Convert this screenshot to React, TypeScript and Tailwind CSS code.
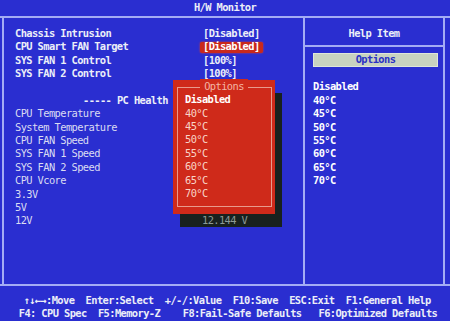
const MONO = "font-['DejaVu_Sans_Mono','Liberation_Mono',monospace]";

const settings = [
  { label: 'Chassis Intrusion', value: '[Disabled]' },
  { label: 'CPU Smart FAN Target', value: '[Disabled]', active: true },
  { label: 'SYS FAN 1 Control', value: '[100%]' },
  { label: 'SYS FAN 2 Control', value: '[100%]' },
];

const readings = [
  'CPU Temperature',
  'System Temperature',
  'CPU FAN Speed',
  'SYS FAN 1 Speed',
  'SYS FAN 2 Speed',
  'CPU Vcore',
  '3.3V',
  '5V',
  '12V',
];

const options = ['Disabled', '40°C', '45°C', '50°C', '55°C', '60°C', '65°C', '70°C'];

function Row({ children, className = '' }: { children?: React.ReactNode; className?: string }) {
  return <div className={`h-[13.4px] flex items-center whitespace-pre ${className}`}>{children}</div>;
}

function OptionsPopup() {
  return (
    <>
      {/* drop shadow, one cell right and one row down */}
      <div className="absolute left-[176px] top-[75.4px] w-[102px] h-[134px] bg-[#18211e] flex flex-col justify-end">
        <Row className="pl-[22px] font-normal text-[#8c9a96]">12.144 V</Row>
      </div>
      <div className="absolute left-[169px] top-[62px] w-[102px] h-[134px] bg-[#cf2a1a]">
        <div className="absolute left-[4px] right-[3px] top-[6.7px] bottom-[6.7px] border border-[#e89a8c]" />
        <div className="relative flex flex-col">
          <Row className="justify-center">
            <span className="bg-[#cf2a1a] px-[4px] font-normal text-[#f4b4a4]">Options</span>
          </Row>
          {options.map((o, i) => (
            <Row key={o} className={`pl-[12px] ${i === 0 ? 'text-white' : 'font-normal text-[#f8d4c8]'}`}>
              {o}
            </Row>
          ))}
        </div>
      </div>
    </>
  );
}

export default function App() {
  return (
    <div className={`w-[450px] h-[321px] bg-[#2a2ed0] text-[#eceef8] text-[10.4px] tracking-[-0.6px] font-bold ${MONO} flex flex-col overflow-hidden`}>
      <div className="h-[18px] border-b-2 border-[#a4acf4] flex items-center justify-center pb-[1px]">
        H/W Monitor
      </div>

      <div className="h-[268px] flex border-b-2 border-[#a4acf4]">
        <div className="ml-[2px] w-[303px] border-l-2 border-r-2 border-[#a4acf4] relative pt-[9px] pl-[11px]">
          {settings.map((s) => (
            <Row key={s.label}>
              <span className="w-[188px]">{s.label}</span>
              {s.active ? (
                <span className="-ml-[3px] px-[3px] h-[11px] flex items-center bg-[#c9291c] rounded-[2px] text-white shadow-[0_0_2px_#e04030]">
                  {s.value}
                </span>
              ) : (
                <span>{s.value}</span>
              )}
            </Row>
          ))}
          <Row />
          <Row className="pl-[68px]">----- PC Health</Row>
          {readings.map((r) => (
            <Row key={r} className="font-normal text-[#dadcf2]">
              {r}
            </Row>
          ))}
          <OptionsPopup />
        </div>

        <div className="w-[140px] mr-[3px] border-r-2 border-[#a4acf4] flex flex-col">
          <div className="h-[29px] border-b-2 border-[#a4acf4] pt-[9px]">
            <Row className="justify-center">Help Item</Row>
          </div>
          <div className="mt-[6px] ml-[8px] mr-[5px] h-[14px] bg-[#c8d2c0] border border-[#dfe6d8] flex items-center justify-center text-[#2a30c4]">
            Options
          </div>
          <div className="mt-[13.5px] pl-[8px] text-white">
            {options.map((o) => (
              <Row key={o}>{o}</Row>
            ))}
          </div>
        </div>
      </div>

      <div className="pt-[8px] flex flex-col items-center">
        <Row className="pl-[4px]">{'↑↓←→:Move  Enter:Select  +/-/:Value  F10:Save  ESC:Exit  F1:General Help'}</Row>
        <Row className="pl-[6px]">{'F4: CPU Spec  F5:Memory-Z    F8:Fail-Safe Defaults   F6:Optimized Defaults'}</Row>
      </div>
    </div>
  );
}
